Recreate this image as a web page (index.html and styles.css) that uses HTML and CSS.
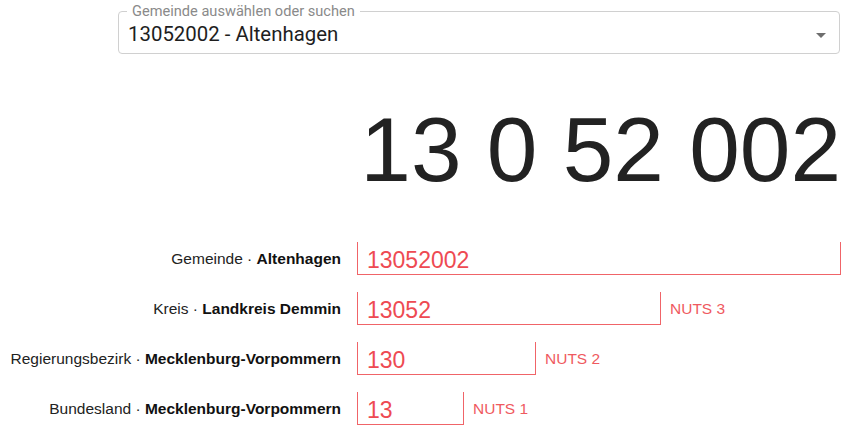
FILE: index.html
```html
<!DOCTYPE html>
<html lang="de">
<head>
<meta charset="utf-8">
<title>Gemeindeschlüssel</title>
<link rel="stylesheet" href="styles.css">
</head>
<body>
<div class="page">
  <div class="picker">
    <fieldset class="select">
      <legend class="select-label">Gemeinde auswählen oder suchen</legend>
      <div class="select-row">
        <span class="select-value">13052002 - Altenhagen</span>
        <span class="select-arrow"></span>
      </div>
    </fieldset>
  </div>

  <div class="bignum">13 0 52 002</div>

  <div class="rows">
    <div class="label">Gemeinde · <b>Altenhagen</b></div>
    <div class="cell"><div class="box w8">13052002</div></div>

    <div class="label">Kreis · <b>Landkreis Demmin</b></div>
    <div class="cell"><div class="box w5">13052</div><span class="nuts">NUTS 3</span></div>

    <div class="label">Regierungsbezirk · <b>Mecklenburg-Vorpommern</b></div>
    <div class="cell"><div class="box w3">130</div><span class="nuts">NUTS 2</span></div>

    <div class="label">Bundesland · <b>Mecklenburg-Vorpommern</b></div>
    <div class="cell"><div class="box w2">13</div><span class="nuts">NUTS 1</span></div>
  </div>
</div>
</body>
</html>
```

FILE: styles.css
```css
* { box-sizing: border-box; }
html, body { margin: 0; padding: 0; background: #fff; }
body { font-family: "Liberation Sans", Arial, sans-serif; color: #222; }

.page { width: 850px; }

.picker { padding: 3px 10px 0 118px; }
.select {
  margin: 0;
  border: 1px solid #d0d0d0;
  border-radius: 4px;
  padding: 0 13px 5px 8px;
  font-family: Roboto, "Liberation Sans", sans-serif;
}
.select-label {
  padding: 0 5px;
  font-size: 14.6px;
  line-height: 17px;
  color: #8a8a8a;
}
.select-row {
  display: flex;
  align-items: center;
  justify-content: space-between;
  height: 28px;
}
.select-value {
  font-size: 20.4px;
  line-height: 28px;
  color: #1e1e1e;
  padding-left: 1px;
}
.select-arrow {
  width: 0; height: 0;
  border-left: 5px solid transparent;
  border-right: 5px solid transparent;
  border-top: 5px solid #6e6e6e;
  margin-top: 2px;
}

.bignum {
  margin-top: 51px;
  padding-right: 9px;
  text-align: right;
  font-size: 91px;
  line-height: 90px;
  color: #222;
}

.rows {
  margin-top: 47px;
  display: grid;
  grid-template-columns: 341px auto;
  column-gap: 16px;
  row-gap: 17px;
  align-items: center;
}
.label {
  text-align: right;
  font-size: 15.5px;
  line-height: 18px;
  color: #222;
  white-space: nowrap;
}
.label b { font-weight: bold; color: #111; }

.cell { display: flex; align-items: center; gap: 9px; }
.box {
  height: 33px;
  border: 1px solid #f06468;
  border-top: none;
  padding: 5px 0 0 9px;
  font-size: 23px;
  line-height: 26px;
  color: #ee4a52;
}
.w8 { width: 484px; }
.w5 { width: 304px; }
.w3 { width: 179px; }
.w2 { width: 107px; }

.nuts {
  font-size: 15.5px;
  line-height: 18px;
  color: #ef5a60;
}
```
